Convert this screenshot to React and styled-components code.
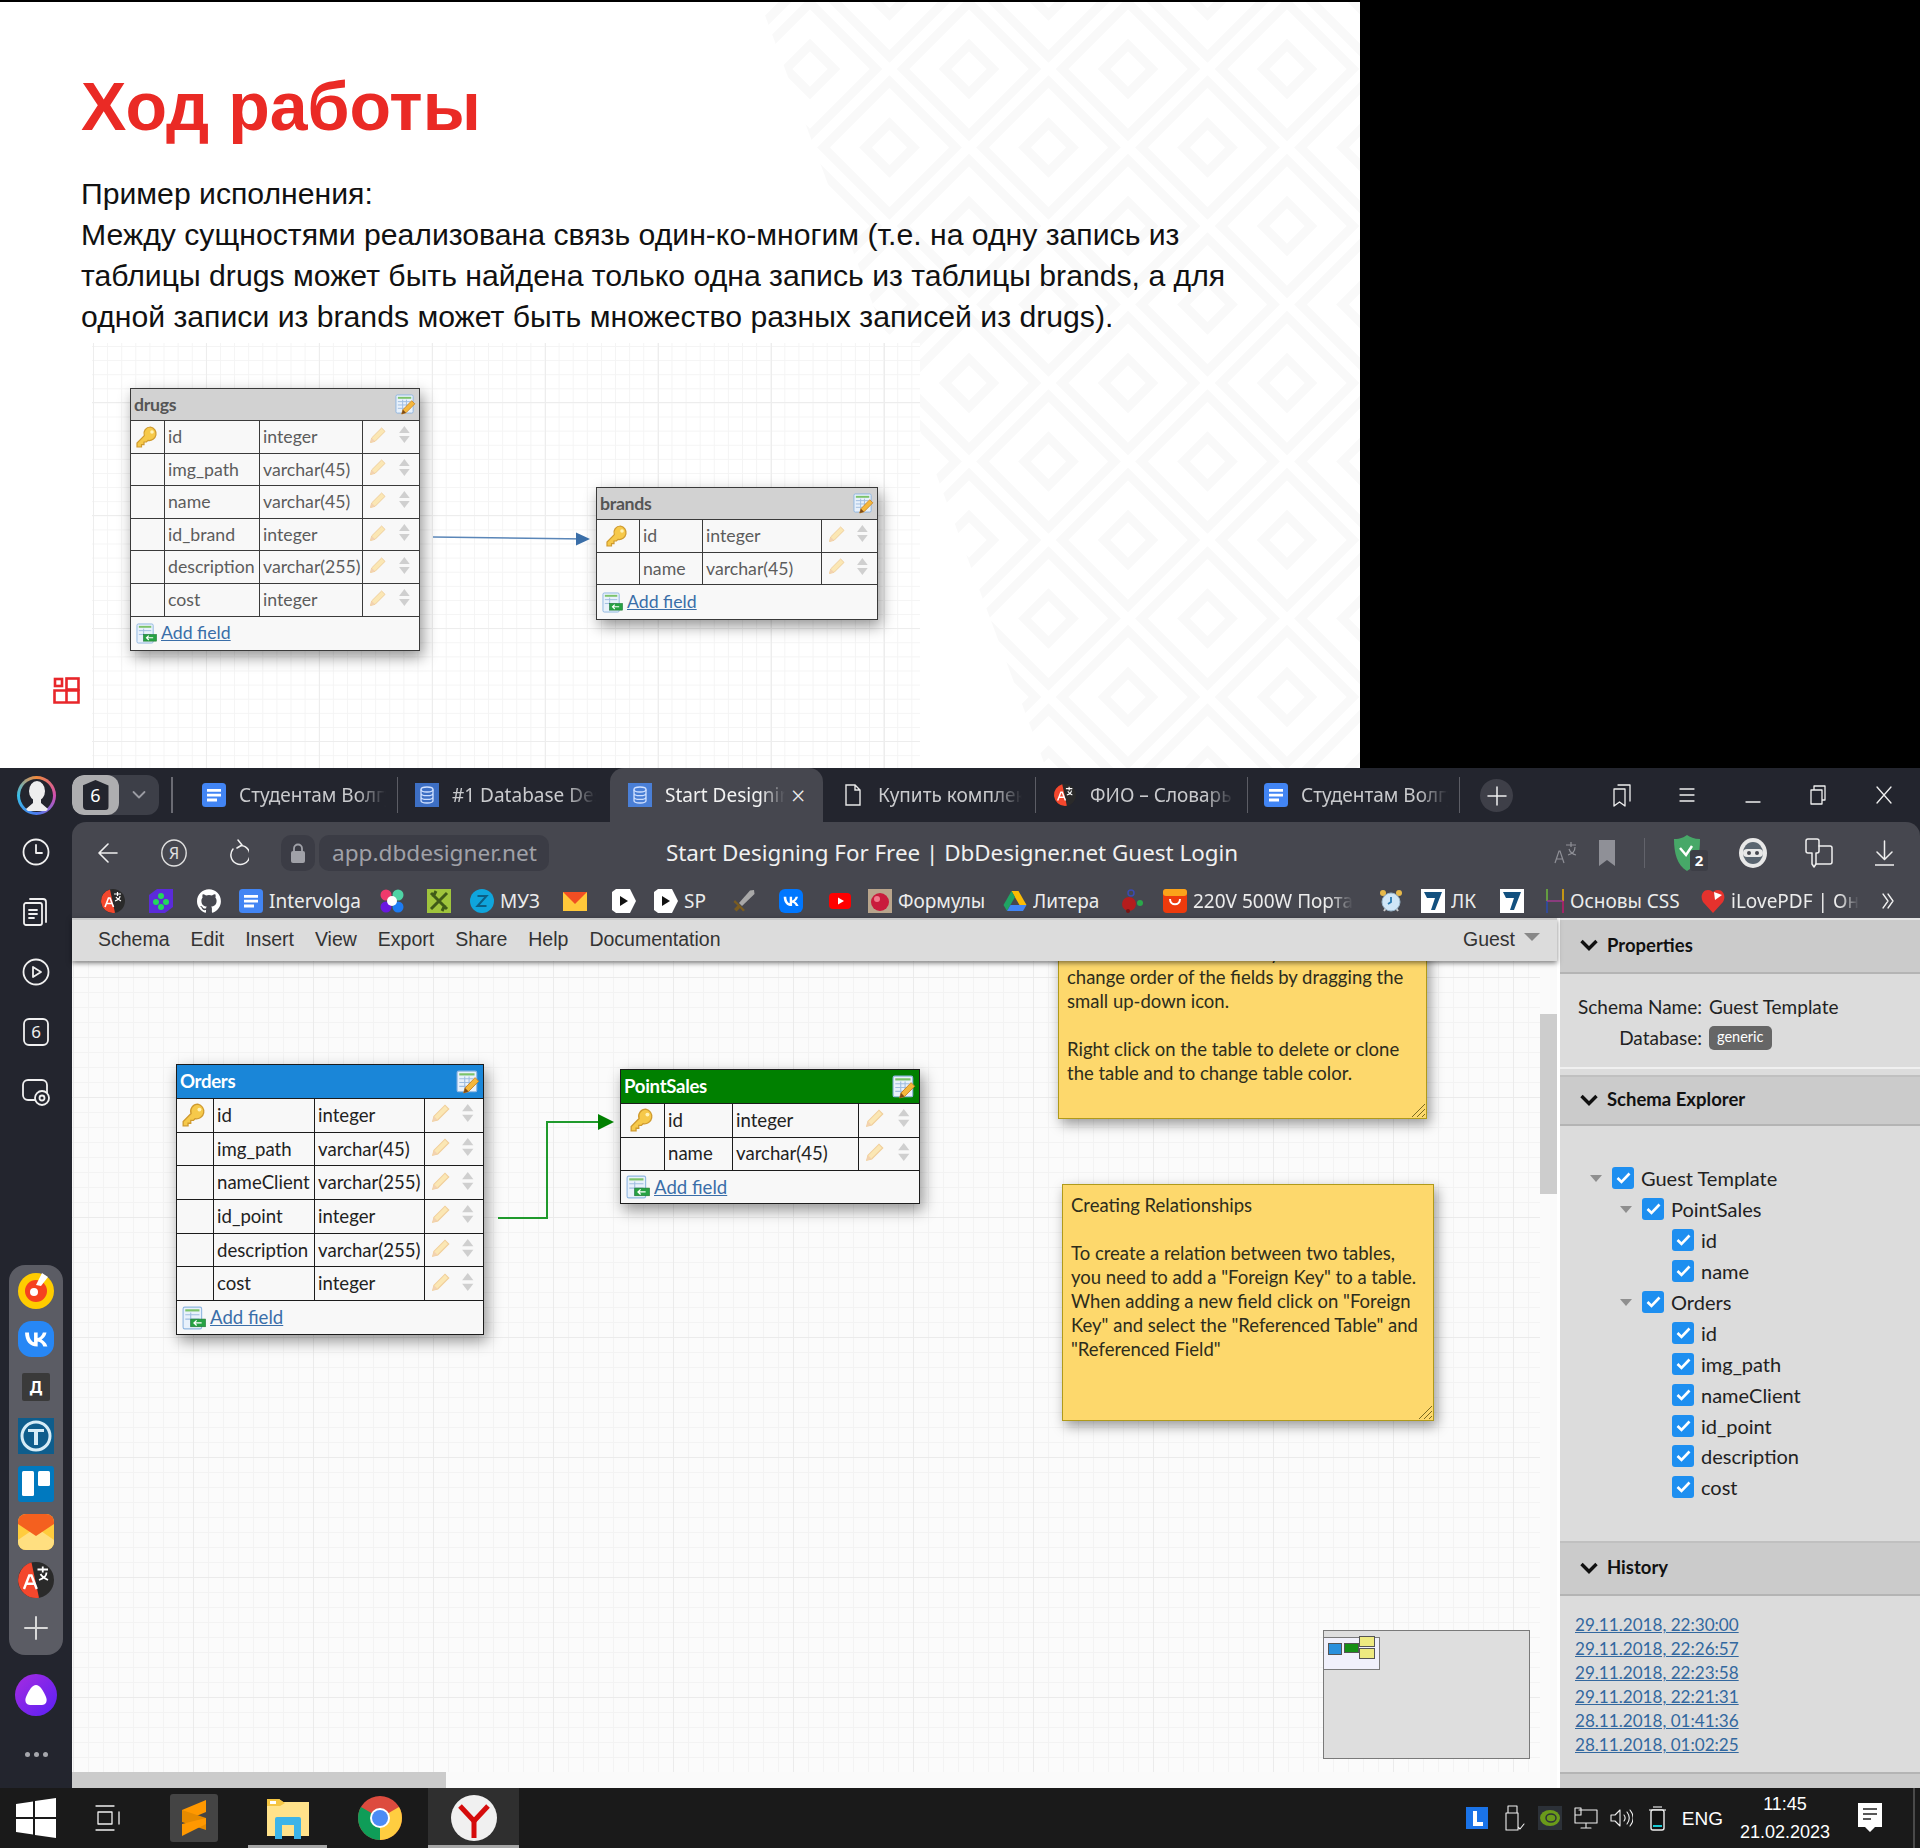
import React from "react";
import styled, { createGlobalStyle } from "styled-components";

const UI_FONT = '"Lato", "Noto Sans", sans-serif';
const BROWSER_FONT = '"Noto Sans", "Open Sans", sans-serif';
const ARIAL = '"Liberation Sans", Arial, sans-serif';

const GlobalStyle = createGlobalStyle`
  html, body { margin: 0; padding: 0; background: #000; }
  * { box-sizing: border-box; }
`;

/* ---------- table icons ---------- */
const KeyIcon = ({ size = 24 }) => (
  <svg width={size} height={size} viewBox="0 0 24 24">
    <path d="M15.5 2a6.5 6.5 0 0 0-6.2 8.6L2 18v4h4.5v-2.4H9V17h2.4l1.6-1.6A6.5 6.5 0 1 0 15.5 2z" fill="#f6c94a" stroke="#cf9a2e" strokeWidth="1.2" />
    <circle cx="17" cy="7" r="1.8" fill="#fff3b8" />
  </svg>
);
const PencilIcon = ({ size = 18 }) => (
  <svg width={size} height={size} viewBox="0 0 18 18">
    <path d="M1.5 16.5l1.2-4.6L12.6 2l3.4 3.4-9.9 9.900z" fill="#fbe7b4" stroke="#f0cf9c" strokeWidth="1" />
    <path d="M1.5 16.5l1.2-4.6 3.4 3.4z" fill="#f3d2b0" />
  </svg>
);
const UpDownIcon = ({ size = 16 }) => (
  <svg width={size * 0.75} height={size} viewBox="0 0 12 16">
    <path d="M6 0l5 6.5H1z" fill="#cfcfcf" />
    <path d="M6 16l5-6.5H1z" fill="#cfcfcf" />
  </svg>
);
const TableEditIcon = ({ size = 22 }) => (
  <svg width={size} height={size} viewBox="0 0 22 22">
    <rect x="1" y="1" width="18" height="19" rx="1.5" fill="#e8f1fb" stroke="#8fb6e0" />
    <rect x="3" y="3" width="14" height="2" fill="#7cc36a" />
    <path d="M3 8h13M3 11.5h13M3 15h13M8 6v12M12 6v12" stroke="#9fbde0" strokeWidth="1" />
    <path d="M7 21l1.3-4.5L17.5 7l3.3 3.3-9.3 9.4z" fill="#f5b73c" stroke="#c97f1c" strokeWidth=".8" />
    <path d="M7 21l1.3-4.5 3.2 3.2z" fill="#7a4a1a" />
  </svg>
);
const AddFieldIcon = ({ size = 22 }) => (
  <svg width={size} height={size} viewBox="0 0 22 22">
    <rect x="1" y="1" width="17" height="20" rx="1.5" fill="#e8f1fb" stroke="#8fb6e0" />
    <rect x="3" y="3" width="13" height="2" fill="#7cc36a" />
    <path d="M3 8h13M3 12h13M8 6v13" stroke="#9fbde0" strokeWidth="1" />
    <rect x="8" y="12" width="13.5" height="7" fill="#27a243" stroke="#1d7a32" strokeWidth=".6" />
    <path d="M18 15.5h-7m2.4-2.3l-2.4 2.3 2.4 2.3" stroke="#fff" strokeWidth="1.2" fill="none" />
  </svg>
);

/* ---------- browser icons ---------- */
const DocsIcon = ({ size = 24 }) => (
  <svg width={size} height={size} viewBox="0 0 24 24">
    <rect width="24" height="24" rx="3.5" fill="#4285f4" />
    <path d="M5 6h14v2.8H5zM5 10.8h14v2.8H5zM5 15.6h10v2.8H5z" fill="#fff" />
  </svg>
);
const DbIcon = ({ size = 24, bg = "#3d6fc4" }) => (
  <svg width={size} height={size} viewBox="0 0 24 24">
    <rect width="24" height="24" fill={bg} />
    <ellipse cx="12" cy="6.5" rx="6" ry="2.5" fill="none" stroke="#cfe0ff" strokeWidth="1.3" />
    <path d="M6 6.5v11c0 1.4 2.7 2.5 6 2.5s6-1.1 6-2.5v-11M6 10.2c0 1.4 2.7 2.5 6 2.5s6-1.1 6-2.5M6 13.900c0 1.4 2.7 2.500 6 2.500s6-1.100 6-2.500" fill="none" stroke="#cfe0ff" strokeWidth="1.3" />
  </svg>
);
const PageIcon = () => (
  <svg width="16" height="22" viewBox="0 0 16 22" fill="none" stroke="#e8e8e8" strokeWidth="1.4">
    <path d="M1 1h9l5 5v15H1zM10 1v5h5" />
  </svg>
);
const TranslateBadge = ({ size = 24 }) => (
  <svg width={size} height={size} viewBox="0 0 24 24">
    <circle cx="12" cy="12" r="12" fill="#2a2a2a" />
    <path d="M9 0.4A12 12 0 0 0 12 24a12 12 0 0 0 2-.17z" fill="#f4472d" />
    <path d="M4 18l3.5-9h1.5l3.5 9M5.500 14.5h5" stroke="#fff" strokeWidth="1.6" fill="none" />
    <path d="M13 5h7M16.5 3v4M14 12c3-1 5-3 5-5M15 8c1 2 3 3 5 4" stroke="#fff" strokeWidth="1.2" fill="none" />
  </svg>
);
const PurpleIcon = () => (
  <svg width="24" height="24" viewBox="0 0 24 24">
    <path d="M0 6l8-6h16v18l-8 6H0z" fill="#5b2bd9" />
    <circle cx="12" cy="7" r="3" fill="#22d95c" />
    <circle cx="7" cy="13" r="3" fill="#22d95c" />
    <circle cx="17" cy="13" r="3" fill="#22d95c" />
    <circle cx="12" cy="18" r="3" fill="#22d95c" />
  </svg>
);
const GithubIcon = () => (
  <svg width="24" height="24" viewBox="0 0 24 24">
    <path fill="#fff" d="M12 .3C5.4.3 0 5.7 0 12.3c0 5.3 3.4 9.800 8.200 11.400.6.1.8-.3.8-.6v-2c-3.300.7-4-1.600-4-1.600-.5-1.400-1.300-1.800-1.300-1.800-1.100-.7.1-.7.1-.7 1.200.1 1.800 1.200 1.800 1.200 1.100 1.800 2.800 1.300 3.500 1 .1-.8.4-1.300.8-1.600-2.700-.3-5.500-1.300-5.500-5.900 0-1.300.5-2.400 1.200-3.200-.1-.3-.5-1.500.1-3.200 0 0 1-.3 3.300 1.200a11.500 11.500 0 0 1 6 0c2.300-1.500 3.300-1.200 3.300-1.200.7 1.700.2 2.900.1 3.200.8.8 1.200 1.900 1.200 3.200 0 4.600-2.800 5.600-5.500 5.900.4.4.8 1.100.8 2.200v3.300c0 .3.2.7.8.6 4.800-1.600 8.200-6.100 8.200-11.400C24 5.700 18.600.3 12 .3z" />
  </svg>
);
const FlowerIcon = () => (
  <svg width="24" height="24" viewBox="0 0 24 24">
    <circle cx="6" cy="6" r="5.5" fill="#f03a6c" />
    <circle cx="18" cy="6" r="5.5" fill="#4fd3a4" />
    <circle cx="6" cy="18" r="5.5" fill="#6a18e0" />
    <circle cx="18" cy="18" r="5.5" fill="#1d7bf2" />
    <circle cx="12" cy="12" r="5" fill="#fff" />
  </svg>
);
const GreenXIcon = () => (
  <svg width="24" height="24" viewBox="0 0 24 24">
    <rect width="24" height="24" fill="#9fc43c" />
    <path d="M4 4l16 16M20 4L4 20M9 2l-3 6M15 22l3-6" stroke="#3f5a18" strokeWidth="3" />
  </svg>
);
const ZIcon = () => (
  <svg width="24" height="24" viewBox="0 0 24 24">
    <circle cx="12" cy="12" r="12" fill="#0fa5dc" />
    <path d="M7.5 7h9l-9 10h9" stroke="#0b5f85" strokeWidth="2" fill="none" />
  </svg>
);
const MailIcon = () => (
  <svg width="24" height="24" viewBox="0 0 24 24">
    <rect y="3" width="24" height="19" fill="#ffc83a" />
    <path d="M0 3h24L12 15z" fill="#f04e23" />
  </svg>
);
const PlayIcon = () => (
  <svg width="24" height="24" viewBox="0 0 24 24">
    <path d="M0 3l4-3h14l6 12-6 12H4l-4-3z" fill="#fff" />
    <path d="M8 7l8 5-8 5z" fill="#111" />
  </svg>
);
const SwordIcon = () => (
  <svg width="24" height="24" viewBox="0 0 24 24">
    <path d="M22 1l-4 .5L7 14l3 3L22.500 5z" fill="#a8a8a8" />
    <path d="M3 11l10 10-2 1.500L8 19l-3.500 3.500L2 20l3.500-3.500L1.500 13z" fill="#7a5c20" />
  </svg>
);
const VkIcon = ({ size = 24, bg = "#0077ff", radius = 6 }) => (
  <svg width={size} height={size} viewBox="0 0 24 24">
    <rect width="24" height="24" rx={radius} fill={bg} />
    <path d="M12.8 17c-5.100 0-8-3.500-8.100-9.300h2.600c.1 4.300 2 6.100 3.400 6.500V7.700h2.400v3.700c1.500-.2 3-1.900 3.500-3.700h2.400c-.4 2.300-2.100 4-3.300 4.700 1.200.6 3.100 2.100 3.900 4.600h-2.700c-.6-1.800-2-3.100-3.800-3.300V17z" fill="#fff" />
  </svg>
);
const YoutubeIcon = () => (
  <svg width="24" height="24" viewBox="0 0 24 24">
    <rect x="1" y="4" width="22" height="16" rx="4" fill="#f00" />
    <path d="M10 8.5l6 3.5-6 3.500z" fill="#fff" />
  </svg>
);
const PictureIcon = () => (
  <svg width="24" height="24" viewBox="0 0 24 24">
    <rect width="24" height="24" fill="#b9a58c" />
    <circle cx="12" cy="13" r="9" fill="#c91c3c" />
    <circle cx="9" cy="10" r="3" fill="#f07a8c" />
  </svg>
);
const DriveIcon = () => (
  <svg width="24" height="24" viewBox="0 0 24 24">
    <path d="M8.5 2h7l8 14h-7z" fill="#fbbc04" />
    <path d="M8.5 2L.5 16l3.500 6 8-14z" fill="#1fa463" />
    <path d="M4 22h16l3.500-6h-16z" fill="#4285f4" />
  </svg>
);
const RedThingIcon = () => (
  <svg width="24" height="24" viewBox="0 0 24 24">
    <circle cx="9" cy="15" r="7" fill="#b51d1d" />
    <circle cx="11" cy="4" r="3" fill="none" stroke="#3a4bb0" strokeWidth="1.5" />
    <circle cx="20" cy="14" r="3" fill="#2aa84a" />
    <circle cx="8" cy="22" r="2" fill="#7a1414" />
  </svg>
);
const AliIcon = () => (
  <svg width="24" height="24" viewBox="0 0 24 24">
    <rect width="24" height="24" rx="4" fill="#ee3a0c" />
    <rect width="24" height="7" rx="3" fill="#fba31a" />
    <path d="M7 10c0 7 10 7 10 0" stroke="#fff" strokeWidth="2" fill="none" />
  </svg>
);
const ClockIcon = () => (
  <svg width="24" height="24" viewBox="0 0 24 24">
    <circle cx="4" cy="4" r="3" fill="#e6b84a" />
    <circle cx="20" cy="4" r="3" fill="#e6b84a" />
    <path d="M5 22l2-3M19 22l-2-3" stroke="#c9c9c9" strokeWidth="2" />
    <circle cx="12" cy="13" r="9" fill="#cfe6f7" stroke="#9ab7cc" />
    <path d="M12 8v5l-3 2" stroke="#2a7ab0" strokeWidth="1.8" fill="none" />
  </svg>
);
const YLkIcon = ({ bg = "#fff" }) => (
  <svg width="24" height="24" viewBox="0 0 24 24">
    <rect width="24" height="24" fill={bg} />
    <path d="M3 3h18l-7 18h-4l4-12H6z" fill="#12507f" />
  </svg>
);
const MultiHIcon = () => (
  <svg width="18" height="24" viewBox="0 0 18 24">
    <path d="M1 0v12" stroke="#6fb83c" strokeWidth="1.5" />
    <path d="M1 12v12" stroke="#2a4bb0" strokeWidth="1.5" />
    <path d="M17 0v12" stroke="#f0b000" strokeWidth="1.5" />
    <path d="M17 12v12" stroke="#c0186c" strokeWidth="1.5" />
    <path d="M1 12h16" stroke="#a0388c" strokeWidth="1.5" />
  </svg>
);
const HeartIcon = () => (
  <svg width="24" height="24" viewBox="0 0 24 24">
    <path d="M12 24L2 13C-1 8 1 1 7 1c3 0 5 2 5 2s2-2 5-2c6 0 8 7 5 12z" fill="#e5322d" />
    <path d="M13 3l8 3-7 5z" fill="#fff" />
  </svg>
);
const StrokeIcon = ({ w = 28, h = 28, box = "0 0 28 28", sw = 1.8, color = "#f0f0f0", children }) => (
  <svg width={w} height={h} viewBox={box} fill="none" stroke={color} strokeWidth={sw} strokeLinecap="round" strokeLinejoin="round">
    {children}
  </svg>
);

/* ---------- page layout ---------- */
const Page = styled.div`
  width: 1920px;
  height: 1848px;
  background: #000;
  display: flex;
  flex-direction: column;
  overflow: hidden;
`;

/* slide */
const SlideArea = styled.div`
  height: 768px;
  padding-top: 2px;
  flex: none;
`;
const Slide = styled.section`
  position: relative;
  width: 1360px;
  height: 766px;
  background: #fff;
  overflow: hidden;
  padding: 64px 0 0 81px;
`;
const SlidePattern = styled.svg`
  position: absolute;
  left: 0;
  top: 0;
`;
const SlideTitle = styled.h1`
  position: relative;
  margin: 0;
  font: 700 68px/80px ${ARIAL};
  color: #ea2a25;
`;
const SlideText = styled.p`
  position: relative;
  margin: 27px 0 0;
  font: 400 30.2px/41px ${ARIAL};
  color: #111;
  white-space: nowrap;
`;
const ShotCanvas = styled.div`
  position: absolute;
  left: 92px;
  top: 341px;
  width: 828px;
  height: 425px;
  background-color: #fff;
  background-image:
    linear-gradient(#ededed 1px, transparent 1px),
    linear-gradient(90deg, #ededed 1px, transparent 1px),
    linear-gradient(#f4f4f4 1px, transparent 1px),
    linear-gradient(90deg, #f4f4f4 1px, transparent 1px);
  background-size: 113px 113px, 113px 113px, 14.12px 14.12px, 14.12px 14.12px;
  background-position: 0 59px, 1px 0, 0 3px, 1px 0;
`;
const SlideLogo = styled.svg`
  position: absolute;
  left: 53px;
  top: 675px;
`;

/* db tables */
const DbTable = styled.div`
  position: absolute;
  left: ${(p) => p.$x}px;
  top: ${(p) => p.$y}px;
  width: ${(p) => p.$w}px;
  background: #f8f8f8;
  border: ${(p) => p.$bw}px solid ${(p) => p.$line};
  box-shadow: 3px 6px 14px rgba(0, 0, 0, 0.42);
  font-family: ${UI_FONT};
  font-size: ${(p) => p.$fs}px;
  color: ${(p) => p.$text};
  line-height: 1;
`;
const DbHead = styled.div`
  height: ${(p) => p.$h}px;
  background: ${(p) => p.$bg};
  color: ${(p) => p.$fg};
  font-weight: 700;
  display: flex;
  align-items: center;
  justify-content: space-between;
  padding: 0 3px;
  letter-spacing: -0.3px;
`;
const DbRow = styled.div`
  display: grid;
  grid-template-columns: ${(p) => p.$cols};
  height: ${(p) => p.$h}px;
  border-top: ${(p) => p.$bw}px solid ${(p) => p.$line};
`;
const DbCell = styled.div`
  display: flex;
  align-items: center;
  padding-left: 3px;
  border-left: ${(p) => (p.$first ? 0 : p.$bw)}px solid ${(p) => p.$line};
  white-space: nowrap;
  overflow: hidden;
`;
const KeyCell = styled(DbCell)`
  justify-content: center;
  padding: 0 2px 0 0;
`;
const ActionCell = styled(DbCell)`
  justify-content: space-between;
  padding: 0 ${(p) => p.$pr}px 4px ${(p) => p.$pl}px;
`;
const AddRow = styled.div`
  height: ${(p) => p.$h}px;
  border-top: ${(p) => p.$bw}px solid ${(p) => p.$line};
  display: flex;
  align-items: center;
  gap: 4px;
  padding-left: 5px;
`;
const AddLink = styled.a`
  color: #3a6ea8;
  text-decoration: underline;
`;

/* browser */
const Browser = styled.div`
  flex: none;
  height: 1020px;
  background: #23252e;
  display: flex;
  flex-direction: column;
`;
const TabStrip = styled.div`
  height: 54px;
  flex: none;
  display: flex;
  align-items: flex-start;
  padding-left: 17px;
  font-family: ${BROWSER_FONT};
`;
const Avatar = styled.div`
  width: 39px;
  height: 39px;
  margin-top: 8px;
  border-radius: 50%;
  background: conic-gradient(#f08a3c, #d14fb0, #4a7bf0, #38c0e8, #f08a3c);
  padding: 3px;
  display: flex;
`;
const AvatarInner = styled.div`
  flex: 1;
  border-radius: 50%;
  background: #23252e;
  display: flex;
  align-items: center;
  justify-content: center;
`;
const GroupPill = styled.div`
  margin: 7px 0 0 16px;
  width: 87px;
  height: 40px;
  border-radius: 12px;
  background: #3d3f48;
  display: flex;
  overflow: hidden;
`;
const GroupCount = styled.div`
  width: 47px;
  background: #aeaeb0;
  border-radius: 12px;
  display: flex;
  align-items: center;
  justify-content: center;
`;
const CountHex = styled.div`
  width: 26px;
  height: 30px;
  background: #23252e;
  color: #fff;
  font-size: 18px;
  clip-path: polygon(50% 0, 100% 18%, 100% 100%, 0 100%, 0 18%);
  border-radius: 4px;
  display: flex;
  align-items: center;
  justify-content: center;
`;
const GroupArrow = styled.div`
  flex: 1;
  display: flex;
  align-items: center;
  justify-content: center;
`;
const StripDivider = styled.div`
  width: 2px;
  height: 36px;
  margin: 9px 0 0 12px;
  background: #6a6b73;
`;
const Tab = styled.div`
  width: ${(p) => p.$w}px;
  height: ${(p) => (p.$active ? 54 : 36)}px;
  margin-top: ${(p) => (p.$active ? 0 : 9)}px;
  padding-left: ${(p) => p.$pl}px;
  display: flex;
  align-items: center;
  position: relative;
  color: ${(p) => (p.$active ? "#f2f2f2" : "#c9cacd")};
  font-size: 19px;
  background: ${(p) => (p.$active ? "#46474f" : "transparent")};
  border-radius: ${(p) => (p.$active ? "14px 14px 0 0" : 0)};
  border-right: ${(p) => (p.$active || p.$noline ? "none" : "1px solid #5c5d65")};
`;
const TabIconBox = styled.div`
  width: 24px;
  display: flex;
  justify-content: center;
  flex: none;
`;
const TabLabel = styled.span`
  margin-left: 13px;
  width: ${(p) => p.$w}px;
  white-space: nowrap;
  overflow: hidden;
  -webkit-mask-image: linear-gradient(90deg, #000 80%, transparent);
  mask-image: linear-gradient(90deg, #000 80%, transparent);
`;
const TabClose = styled.span`
  margin-left: 6px;
  font-size: 25px;
  font-weight: 300;
  color: #eee;
`;
const PlusCircle = styled.div`
  width: 33px;
  height: 33px;
  margin: 11px 0 0 20px;
  border-radius: 50%;
  background: #3e3f48;
  display: flex;
  align-items: center;
  justify-content: center;
`;
const WinControl = styled.div`
  margin: 9px 0 0 ${(p) => p.$ml}px;
  height: 36px;
  display: flex;
  align-items: center;
`;

const BrowserBody = styled.div`
  flex: 1;
  display: flex;
  min-height: 0;
`;
const Sidebar = styled.aside`
  width: 72px;
  flex: none;
  display: flex;
  flex-direction: column;
  align-items: center;
`;
const SideSlot = styled.div`
  height: 60px;
  width: 100%;
  display: flex;
  align-items: center;
  justify-content: center;
`;
const SidePanel = styled.div`
  width: 54px;
  margin-top: 143px;
  padding: 2px 0;
  border-radius: 16px;
  background: #5b5c64;
  display: flex;
  flex-direction: column;
  align-items: center;
`;
const SidePanelSlot = styled.div`
  height: 48.2px;
  display: flex;
  align-items: center;
  justify-content: center;
`;
const AliceBubble = styled.div`
  width: 42px;
  height: 42px;
  margin-top: 19px;
  border-radius: 50%;
  background: linear-gradient(135deg, #a62ce0, #5a20f5);
  display: flex;
  align-items: center;
  justify-content: center;
`;
const SideDots = styled.div`
  margin-top: 36px;
  display: flex;
  gap: 4px;
`;
const SideDot = styled.span`
  width: 5px;
  height: 5px;
  border-radius: 50%;
  background: #a6a7ad;
`;

const Main = styled.div`
  flex: 1;
  display: flex;
  flex-direction: column;
  min-width: 0;
`;
const Toolbar = styled.div`
  height: 96px;
  flex: none;
  background: #46474f;
  border-radius: 14px 14px 0 0;
  display: flex;
  flex-direction: column;
`;
const AddressRow = styled.div`
  height: 62px;
  display: grid;
  grid-template-columns: 500px 1fr 588px;
  align-items: center;
`;
const ToolGroup = styled.div`
  display: flex;
  align-items: center;
  padding-left: 26px;
`;
const ToolGroupEnd = styled(ToolGroup)`
  justify-content: flex-end;
  padding: 0 26px 0 0;
`;
const ToolSlot = styled.div`
  margin-left: ${(p) => p.$ml || 0}px;
  display: flex;
  align-items: center;
`;
const LockPill = styled.div`
  margin-left: 32px;
  width: 34px;
  height: 36px;
  border-radius: 10px;
  background: #3b3c45;
  display: flex;
  align-items: center;
  justify-content: center;
`;
const UrlPill = styled.div`
  margin-left: 4px;
  width: 230px;
  height: 36px;
  border-radius: 10px;
  background: #3b3c45;
  color: #a0a1a8;
  font: 400 22.6px/36px ${BROWSER_FONT};
  padding-left: 13px;
  white-space: nowrap;
`;
const PageTitle = styled.div`
  color: #f1f1f1;
  font: 400 22.4px/1 ${BROWSER_FONT};
  text-align: center;
  white-space: nowrap;
`;
const ToolDivider = styled.div`
  width: 1px;
  height: 30px;
  margin-left: 29px;
  background: #62636b;
`;
const Bookmarks = styled.div`
  height: 34px;
  display: flex;
  align-items: center;
  padding-left: 29px;
  color: #ececec;
  font: 400 19px/24px ${BROWSER_FONT};
`;
const Bookmark = styled.div`
  width: ${(p) => p.$w}px;
  flex: none;
  display: flex;
  align-items: center;
  gap: 6px;
  white-space: nowrap;
`;
const BookmarkLabel = styled.span`
  overflow: hidden;
  ${(p) =>
    p.$fade &&
    `width: ${p.$fade}px;
     -webkit-mask-image: linear-gradient(90deg, #000 85%, transparent);
     mask-image: linear-gradient(90deg, #000 85%, transparent);`}
`;

/* designer app */
const Workspace = styled.div`
  flex: 1;
  display: flex;
  min-height: 0;
  background: #fff;
`;
const Designer = styled.div`
  width: 1485px;
  flex: none;
  display: flex;
  flex-direction: column;
`;
const MenuBar = styled.nav`
  position: relative;
  z-index: 3;
  height: 43px;
  flex: none;
  background: #dcdcdc;
  border-top: 2px solid #c8c8c8;
  box-shadow: 0 2px 5px rgba(0, 0, 0, 0.5);
  display: flex;
  align-items: center;
  gap: 21px;
  padding: 0 16px 2px 26px;
  font: 400 19.5px/1 ${ARIAL};
  color: #333;
`;
const GuestMenu = styled.div`
  margin-left: auto;
  display: flex;
  align-items: center;
  gap: 9px;
  margin-right: 1px;
`;
const GuestCaret = styled.span`
  width: 0;
  height: 0;
  margin-bottom: 6px;
  border: 8.5px solid transparent;
  border-top: 8px solid #888;
  border-bottom: 0;
`;
const Canvas = styled.div`
  position: relative;
  flex: 1;
  overflow: hidden;
  background-color: #fbfbfb;
  background-image:
    linear-gradient(#ebebeb 1px, transparent 1px),
    linear-gradient(90deg, #ebebeb 1px, transparent 1px),
    linear-gradient(#f3f3f3 1px, transparent 1px),
    linear-gradient(90deg, #f3f3f3 1px, transparent 1px);
  background-size: 120px 120px, 120px 120px, 15px 15px, 15px 15px;
  background-position: 0 16px, 1px 0, 0 1px, 1px 0;
`;
const Connector = styled.svg`
  position: absolute;
  left: 0;
  top: 0;
`;
const Sticky = styled.div`
  position: absolute;
  left: ${(p) => p.$x}px;
  top: ${(p) => p.$y}px;
  width: ${(p) => p.$w}px;
  height: ${(p) => p.$h}px;
  padding: ${(p) => p.$pt}px 8px 0 8px;
  background: #fdd86c;
  border: 1px solid #b09a1a;
  box-shadow: 3px 5px 12px rgba(0, 0, 0, 0.4);
  font: 400 18.5px/24px ${UI_FONT};
  color: #2c2c1c;
  white-space: pre-line;
  overflow: hidden;
`;
const Grip = styled.svg`
  position: absolute;
  right: 0;
  bottom: 0;
`;
const VScrollTrack = styled.div`
  position: absolute;
  right: 0;
  top: 0;
  bottom: 0;
  width: 17px;
  background: #fafafa;
`;
const VScrollThumb = styled.div`
  margin-top: 53px;
  height: 180px;
  background: #cdcdcd;
`;
const MiniMap = styled.div`
  position: absolute;
  left: 1251px;
  top: 669px;
  width: 207px;
  height: 129px;
  background: #dedede;
  border: 1px solid #7a7a7a;
`;
const MiniView = styled.div`
  position: absolute;
  left: 0;
  top: 6px;
  width: 56px;
  height: 33px;
  background: #f0f0fb;
  border: 1px solid #7a7a7a;
  border-left: 0;
`;
const MiniNode = styled.div`
  position: absolute;
  left: ${(p) => p.$x}px;
  top: ${(p) => p.$y}px;
  width: ${(p) => p.$w}px;
  height: ${(p) => p.$h}px;
  background: ${(p) => p.$bg};
  border: 1px solid #555;
`;
const HScroll = styled.div`
  height: 16px;
  flex: none;
  background: #fafafa;
`;
const HScrollThumb = styled.div`
  width: 374px;
  height: 100%;
  background: #cbcbcb;
`;

const Panel = styled.aside`
  flex: none;
  width: 360px;
  margin-left: 3px;
  background: #dcdcdc;
  display: flex;
  flex-direction: column;
  font: 400 19px/1 ${UI_FONT};
  color: #222;
`;
const PanelHead = styled.div`
  height: ${(p) => p.$h}px;
  margin-top: ${(p) => p.$mt || 0}px;
  flex: none;
  background: #cbcbcb;
  border-top: 2px solid ${(p) => (p.$mt ? "#c0c0c0" : "#e4e4e4")};
  border-bottom: 2px solid #b4b4b4;
  display: flex;
  align-items: center;
  gap: 9px;
  padding: 0 0 2px 20px;
  font-weight: 700;
  font-size: 18.5px;
  color: #111;
`;
const PropsBody = styled.div`
  height: 95px;
  flex: none;
  padding-top: 17px;
  border-bottom: 2px solid #f0f0f0;
  display: grid;
  grid-template-columns: 142px 1fr;
  grid-auto-rows: 31px;
  column-gap: 7px;
  align-items: center;
`;
const PropLabel = styled.div`
  text-align: right;
`;
const Badge = styled.span`
  display: inline-block;
  padding: 4px 8px 5px;
  border-radius: 5px;
  background: #666;
  color: #fff;
  font-size: 14.5px;
`;
const Tree = styled.div`
  height: 409px;
  flex: none;
  padding-top: 37px;
`;
const TreeRow = styled.div`
  height: 30.9px;
  display: flex;
  align-items: center;
  padding-left: ${(p) => 30 + p.$level * 30}px;
`;
const TreeToggle = styled.span`
  width: 12px;
  height: 0;
  margin-right: 10px;
  border-style: solid;
  border-width: 7px 6px 0;
  border-color: ${(p) => (p.$show ? "#8f8f8f" : "transparent")} transparent transparent;
`;
const CheckBox = styled.span`
  width: 22px;
  height: 22px;
  flex: none;
  border-radius: 3px;
  background: #1e8ff0;
  display: flex;
  align-items: center;
  justify-content: center;
`;
const TreeLabel = styled.span`
  margin-left: 7px;
  font-size: 20px;
`;
const HistoryList = styled.div`
  flex: 1;
  padding: 17px 0 0 15px;
  display: flex;
  flex-direction: column;
`;
const HistoryLink = styled.a`
  height: 24px;
  line-height: 24px;
  color: #33689f;
  text-decoration: underline;
  font-size: 17.1px;
`;
const PanelFoot = styled.div`
  height: 16px;
  flex: none;
  background: #cbcbcb;
  border-top: 2px solid #b4b4b4;
`;

/* taskbar */
const Taskbar = styled.footer`
  height: 60px;
  flex: none;
  background: #1a1a1a;
  display: flex;
  align-items: stretch;
`;
const TaskSlot = styled.div`
  position: relative;
  width: ${(p) => p.$w}px;
  margin-left: ${(p) => p.$ml || 0}px;
  background: ${(p) => (p.$active ? "#2f2f2f" : "transparent")};
  display: flex;
  align-items: center;
  justify-content: center;
  &::after {
    content: "";
    display: ${(p) => (p.$open ? "block" : "none")};
    position: absolute;
    left: 0;
    right: 0;
    bottom: 0;
    height: 3px;
    background: #a6a6a6;
  }
`;
const SublimeTile = styled.div`
  width: 48px;
  height: 48px;
  border-radius: 3px;
  background: #444;
  display: flex;
  align-items: center;
  justify-content: center;
`;
const Tray = styled.div`
  margin-left: auto;
  display: flex;
  align-items: center;
  color: #fff;
`;
const TraySlot = styled.div`
  margin-left: ${(p) => p.$ml}px;
  display: flex;
  align-items: center;
`;
const TrayLang = styled.div`
  margin-left: 15px;
  font: 400 19px/1 ${ARIAL};
`;
const Clock = styled.div`
  margin-left: 17px;
  width: 90px;
  text-align: center;
  font: 400 18px/28px ${ARIAL};
`;
const TrayEdge = styled.div`
  width: 2px;
  height: 100%;
  margin-left: 31px;
  margin-right: 5px;
  background: #4a4a4a;
`;

/* ---------- data ---------- */
const ordersFields = [
  ["id", "integer", true],
  ["img_path", "varchar(45)"],
  ["nameClient", "varchar(255)"],
  ["id_point", "integer"],
  ["description", "varchar(255)"],
  ["cost", "integer"],
];
const pointFields = [
  ["id", "integer", true],
  ["name", "varchar(45)"],
];
const drugsFields = [
  ["id", "integer", true],
  ["img_path", "varchar(45)"],
  ["name", "varchar(45)"],
  ["id_brand", "integer"],
  ["description", "varchar(255)"],
  ["cost", "integer"],
];
const brandsFields = [
  ["id", "integer", true],
  ["name", "varchar(45)"],
];

const bookmarks = [
  { w: 48, icon: <TranslateBadge /> },
  { w: 48, icon: <PurpleIcon /> },
  { w: 42, icon: <GithubIcon /> },
  { w: 141, icon: <DocsIcon />, label: "Intervolga" },
  { w: 47, icon: <FlowerIcon /> },
  { w: 43, icon: <GreenXIcon /> },
  { w: 93, icon: <ZIcon />, label: "МУЗ" },
  { w: 49, icon: <MailIcon /> },
  { w: 42, icon: <PlayIcon /> },
  { w: 78, icon: <PlayIcon />, label: "SP" },
  { w: 47, icon: <SwordIcon /> },
  { w: 49, icon: <VkIcon /> },
  { w: 40, icon: <YoutubeIcon /> },
  { w: 135, icon: <PictureIcon />, label: "Формулы" },
  { w: 117, icon: <DriveIcon />, label: "Литера" },
  { w: 43, icon: <RedThingIcon /> },
  { w: 216, icon: <AliIcon />, label: "220V 500W Портативный", fade: 160 },
  { w: 42, icon: <ClockIcon /> },
  { w: 79, icon: <YLkIcon />, label: "ЛК" },
  { w: 46, icon: <YLkIcon /> },
  { w: 155, icon: <MultiHIcon />, label: "Основы CSS" },
  { w: 181, icon: <HeartIcon />, label: "iLovePDF | Онлайн", fade: 128 },
];

const tree = [
  [0, "Guest Template", true],
  [1, "PointSales", true],
  [2, "id"],
  [2, "name"],
  [1, "Orders", true],
  [2, "id"],
  [2, "img_path"],
  [2, "nameClient"],
  [2, "id_point"],
  [2, "description"],
  [2, "cost"],
];

const historyDates = [
  "29.11.2018, 22:30:00",
  "29.11.2018, 22:26:57",
  "29.11.2018, 22:23:58",
  "29.11.2018, 22:21:31",
  "28.11.2018, 01:41:36",
  "28.11.2018, 01:02:25",
];

const Chevron = () => (
  <svg width="18" height="12" viewBox="0 0 18 12" fill="none" stroke="#111" strokeWidth="3.4">
    <path d="M1.5 2l7.5 7.5L16.5 2" />
  </svg>
);
const Check = () => (
  <svg width="15" height="12" viewBox="0 0 15 12" fill="none" stroke="#fff" strokeWidth="2.6">
    <path d="M1.5 6l4 4 8-8.5" />
  </svg>
);

function TableBox({ x, y, w, cols, title, headBg, headFg, fields, rowH, headH, addH, fs, bw, line, text, icons }) {
  return (
    <DbTable $x={x} $y={y} $w={w} $fs={fs} $bw={bw} $line={line} $text={text}>
      <DbHead $h={headH} $bg={headBg} $fg={headFg}>
        {title}
        <TableEditIcon size={icons.edit} />
      </DbHead>
      {fields.map(([name, type, isKey]) => (
        <DbRow key={name} $cols={cols} $h={rowH} $bw={bw} $line={line}>
          <KeyCell $first $bw={bw} $line={line}>
            {isKey && <KeyIcon size={icons.key} />}
          </KeyCell>
          <DbCell $bw={bw} $line={line}>{name}</DbCell>
          <DbCell $bw={bw} $line={line}>{type}</DbCell>
          <ActionCell $bw={bw} $line={line} $pl={icons.pl} $pr={icons.pr}>
            <PencilIcon size={icons.pencil} />
            <UpDownIcon size={icons.arrows} />
          </ActionCell>
        </DbRow>
      ))}
      <AddRow $h={addH} $bw={bw} $line={line}>
        <AddFieldIcon size={icons.edit} />
        <AddLink>Add field</AddLink>
      </AddRow>
    </DbTable>
  );
}

const mainIcons = { edit: 24, key: 26, pencil: 20, arrows: 18, pl: 6, pr: 9 };
const shotIcons = { edit: 21, key: 24, pencil: 18, arrows: 17, pl: 6, pr: 8 };

const lozenge = (cx, cy) =>
  [66, 24].map((r) => (
    <polygon
      key={cx + "-" + cy + "-" + r}
      points={`${cx},${cy - r} ${cx + r},${cy} ${cx},${cy + r} ${cx - r},${cy}`}
      fill="none"
      stroke="#f9f9f9"
      strokeWidth="9"
    />
  ));

export default function App() {
  return (
    <Page>
      <GlobalStyle />
      <SlideArea>
        <Slide>
          <SlidePattern width="1360" height="766">
            <defs>
              <pattern id="lozenges" width="159" height="157" patternUnits="userSpaceOnUse" patternTransform="translate(15 67)">
                {lozenge(0, 0)}
                {lozenge(159, 0)}
                {lozenge(0, 157)}
                {lozenge(159, 157)}
                {lozenge(79.5, 78.5)}
              </pattern>
            </defs>
            <polygon points="760,0 1360,0 1360,766 1046,766" fill="url(#lozenges)" />
          </SlidePattern>
          <SlideTitle>Ход работы</SlideTitle>
          <SlideText>
            Пример исполнения:
            <br />
            Между сущностями реализована связь один-ко-многим (т.е. на одну запись из
            <br />
            таблицы drugs может быть найдена только одна запись из таблицы brands, а для
            <br />
            одной записи из brands может быть множество разных записей из drugs).
          </SlideText>
          <ShotCanvas>
            <TableBox
              x={38} y={45} w={290}
              cols="33px 95px 103px 1fr"
              title="drugs" headBg="#d2d2d2" headFg="#555"
              fields={drugsFields}
              headH={31} rowH={32.6} addH={34}
              fs={17.7} bw={1.5} line="#3a3a3a" text="#5c5c5c" icons={shotIcons}
            />
            <TableBox
              x={504} y={144} w={282}
              cols="42px 63px 119px 1fr"
              title="brands" headBg="#d2d2d2" headFg="#555"
              fields={brandsFields}
              headH={31} rowH={32.6} addH={35}
              fs={17.7} bw={1.5} line="#3a3a3a" text="#5c5c5c" icons={shotIcons}
            />
            <Connector width="828" height="425">
              <path d="M341 194L494 196" stroke="#5a86b8" strokeWidth="1.5" fill="none" />
              <path d="M498 196l-14-6.5v13z" fill="#3a6ea8" />
            </Connector>
          </ShotCanvas>
          <SlideLogo width="27" height="27" viewBox="0 0 27 27" fill="none" stroke="#e8262a" strokeWidth="2.6">
            <rect x="2" y="2" width="7" height="7" />
            <rect x="13.5" y="1.5" width="12" height="11" />
            <path d="M1.5 13.5h24v12h-24zM13.5 13.5v12" />
          </SlideLogo>
        </Slide>
      </SlideArea>

      <Browser>
        <TabStrip>
          <Avatar>
            <AvatarInner>
              <svg width="24" height="30" viewBox="0 0 24 30">
                <ellipse cx="12" cy="10" rx="8" ry="10" fill="#eee" />
                <path d="M8 18h8v4l7 6a14 14 0 0 1-22 0l7-6z" fill="#eee" />
              </svg>
            </AvatarInner>
          </Avatar>
          <GroupPill>
            <GroupCount>
              <CountHex>6</CountHex>
            </GroupCount>
            <GroupArrow>
              <StrokeIcon w={14} h={10} box="0 0 14 10" color="#9a9ba2">
                <path d="M1.5 2l5.5 5.5L12.5 2" />
              </StrokeIcon>
            </GroupArrow>
          </GroupPill>
          <StripDivider />
          <Tab $w={225} $pl={29}>
            <TabIconBox><DocsIcon /></TabIconBox>
            <TabLabel $w={147}>Студентам Волгу</TabLabel>
          </Tab>
          <Tab $w={212} $pl={17} $noline>
            <TabIconBox><DbIcon /></TabIconBox>
            <TabLabel $w={144}>#1 Database Design</TabLabel>
          </Tab>
          <Tab $w={213} $pl={18} $active>
            <TabIconBox><DbIcon bg="#4a7fd6" /></TabIconBox>
            <TabLabel $w={120}>Start Designin</TabLabel>
            <TabClose>×</TabClose>
          </Tab>
          <Tab $w={213} $pl={18}>
            <TabIconBox><PageIcon /></TabIconBox>
            <TabLabel $w={144}>Купить комплект</TabLabel>
          </Tab>
          <Tab $w={212} $pl={17}>
            <TabIconBox><TranslateBadge size={22} /></TabIconBox>
            <TabLabel $w={144}>ФИО – Словарь</TabLabel>
          </Tab>
          <Tab $w={212} $pl={16}>
            <TabIconBox><DocsIcon /></TabIconBox>
            <TabLabel $w={147}>Студентам Волгу</TabLabel>
          </Tab>
          <PlusCircle>
            <StrokeIcon w={20} h={20} box="0 0 20 20" sw={1.5}>
              <path d="M10 1v18M1 10h18" />
            </StrokeIcon>
          </PlusCircle>
          <WinControl $ml={100}>
            <StrokeIcon w={18} h={24} box="0 0 18 24" sw={1.3}>
              <path d="M5 2h12v16M1 6h11v17l-5.5-4L1 23z" />
            </StrokeIcon>
          </WinControl>
          <WinControl $ml={48}>
            <StrokeIcon w={16} h={16} box="0 0 16 16" sw={1.3}>
              <path d="M1 2h14M1 8h14M1 14h14" />
            </StrokeIcon>
          </WinControl>
          <WinControl $ml={50}>
            <StrokeIcon w={16} h={16} box="0 0 16 16" sw={1.3}>
              <path d="M1 15h14" />
            </StrokeIcon>
          </WinControl>
          <WinControl $ml={49}>
            <StrokeIcon w={16} h={20} box="0 0 16 20" sw={1.3}>
              <path d="M1 5h11v14H1zM4 5V1h11v14h-3" />
            </StrokeIcon>
          </WinControl>
          <WinControl $ml={50}>
            <StrokeIcon w={16} h={18} box="0 0 16 18" sw={1.3}>
              <path d="M1 1l14 16M15 1L1 17" />
            </StrokeIcon>
          </WinControl>
        </TabStrip>

        <BrowserBody>
          <Sidebar>
            <SideSlot>
              <StrokeIcon>
                <circle cx="14" cy="14" r="12.5" />
                <path d="M14 7v8h6" />
              </StrokeIcon>
            </SideSlot>
            <SideSlot>
              <StrokeIcon w={26} h={30} box="0 0 26 30">
                <path d="M7 2h13a3 3 0 0 1 3 3v20M3 6h14a2 2 0 0 1 2 2v18a2 2 0 0 1-2 2H3a2 2 0 0 1-2-2V8a2 2 0 0 1 2-2z" />
                <path d="M6 13h8M6 17h8M6 21h5" />
              </StrokeIcon>
            </SideSlot>
            <SideSlot>
              <StrokeIcon>
                <circle cx="14" cy="14" r="12.5" />
                <path d="M11 9l8 5-8 5z" />
              </StrokeIcon>
            </SideSlot>
            <SideSlot>
              <svg width="26" height="28" viewBox="0 0 26 28">
                <rect x="1" y="1" width="24" height="26" rx="5" fill="none" stroke="#f0f0f0" strokeWidth="1.8" />
                <text x="13" y="20" fontSize="17" textAnchor="middle" fill="#f0f0f0" fontFamily={BROWSER_FONT}>6</text>
              </svg>
            </SideSlot>
            <SideSlot>
              <StrokeIcon w={30} h={28} box="0 0 30 28">
                <rect x="2" y="2" width="24" height="20" rx="5" />
                <circle cx="21" cy="20" r="7" fill="#23252e" />
                <circle cx="21" cy="20" r="2.5" />
              </StrokeIcon>
            </SideSlot>
            <SidePanel>
              <SidePanelSlot>
                <svg width="36" height="36" viewBox="0 0 36 36">
                  <circle cx="18" cy="18" r="18" fill="#fc0" />
                  <circle cx="18" cy="18" r="11" fill="#f5411f" />
                  <path d="M24 0l6 4-7 9-5-1z" fill="#fff" />
                  <circle cx="16" cy="19" r="4" fill="#fff" />
                </svg>
              </SidePanelSlot>
              <SidePanelSlot><VkIcon size={36} bg="#2787f5" radius={9} /></SidePanelSlot>
              <SidePanelSlot>
                <svg width="28" height="28" viewBox="0 0 28 28">
                  <rect width="28" height="28" rx="2" fill="#3a3a3a" />
                  <text x="14" y="20" fontSize="16" fontWeight="700" textAnchor="middle" fill="#fff" fontFamily={BROWSER_FONT}>Д</text>
                </svg>
              </SidePanelSlot>
              <SidePanelSlot>
                <svg width="36" height="36" viewBox="0 0 36 36">
                  <rect width="36" height="36" fill="#0e5d8c" />
                  <circle cx="18" cy="18" r="14" fill="none" stroke="#d6ecf6" strokeWidth="3" />
                  <path d="M10 11h16v3h-6v13h-4V14h-6z" fill="#d6ecf6" />
                </svg>
              </SidePanelSlot>
              <SidePanelSlot>
                <svg width="36" height="36" viewBox="0 0 36 36">
                  <rect width="36" height="36" rx="3" fill="#0079bf" />
                  <rect x="4" y="5" width="12" height="25" rx="1.5" fill="#fff" />
                  <rect x="20" y="5" width="12" height="15" rx="1.5" fill="#fff" />
                </svg>
              </SidePanelSlot>
              <SidePanelSlot>
                <svg width="36" height="36" viewBox="0 0 36 36">
                  <rect width="36" height="36" rx="8" fill="#ffcc3d" />
                  <path d="M0 26l13-9h10l13 9v2a8 8 0 0 1-8 8H8a8 8 0 0 1-8-8z" fill="#ffdf80" />
                  <path d="M0 8a8 8 0 0 1 8-8h20a8 8 0 0 1 8 8v2L18 22 0 10z" fill="#f4601f" />
                </svg>
              </SidePanelSlot>
              <SidePanelSlot><TranslateBadge size={36} /></SidePanelSlot>
              <SidePanelSlot>
                <StrokeIcon w={24} h={24} box="0 0 24 24" sw={2} color="#d8d8d8">
                  <path d="M12 1v22M1 12h22" />
                </StrokeIcon>
              </SidePanelSlot>
            </SidePanel>
            <AliceBubble>
              <svg width="24" height="22" viewBox="0 0 24 22">
                <path d="M12 1c4 0 7 5 10 12 2 5-1 8-4 8H6c-3 0-6-3-4-8C5 6 8 1 12 1z" fill="#fff" />
              </svg>
            </AliceBubble>
            <SideDots>
              <SideDot />
              <SideDot />
              <SideDot />
            </SideDots>
          </Sidebar>

          <Main>
            <Toolbar>
              <AddressRow>
                <ToolGroup>
                  <StrokeIcon w={20} h={22} box="0 0 20 22" sw={1.6}>
                    <path d="M19 11H2M10 2l-9 9 9 9" />
                  </StrokeIcon>
                  <ToolSlot $ml={43}>
                    <svg width="26" height="28" viewBox="0 0 26 28">
                      <ellipse cx="13" cy="14" rx="12.2" ry="13" fill="none" stroke="#e0e0e0" strokeWidth="1.4" />
                      <text x="13" y="20" fontSize="16" textAnchor="middle" fill="#e0e0e0" fontFamily={BROWSER_FONT}>Я</text>
                    </svg>
                  </ToolSlot>
                  <ToolSlot $ml={41}>
                    <StrokeIcon w={21} h={28} box="0 0 21 28" sw={1.5}>
                      <path d="M13 6.500A9.500 9.500 0 1 1 5 10M10 1l4 5-5 3" />
                    </StrokeIcon>
                  </ToolSlot>
                  <LockPill>
                    <svg width="14" height="20" viewBox="0 0 14 20">
                      <path d="M3 9V5.5a4 4 0 0 1 8 0V9" fill="none" stroke="#a0a1a8" strokeWidth="1.8" />
                      <rect y="8" width="14" height="12" rx="2" fill="#a0a1a8" />
                    </svg>
                  </LockPill>
                  <UrlPill>app.dbdesigner.net</UrlPill>
                </ToolGroup>
                <PageTitle>Start Designing For Free | DbDesigner.net Guest Login</PageTitle>
                <ToolGroupEnd>
                  <svg width="24" height="24" viewBox="0 0 24 24" fill="none" stroke="#8f9097" strokeWidth="1.2">
                    <path d="M1 22l4-12h1l4 12M2.5 18h6M12 4h10M17 1v5M14 14c4-1 7-4 7-8M15 8c1 3 3 5 7 6" />
                  </svg>
                  <ToolSlot $ml={21}>
                    <svg width="16" height="26" viewBox="0 0 16 26">
                      <path d="M0 0h16v26l-8-6-8 6z" fill="#8f9097" />
                    </svg>
                  </ToolSlot>
                  <ToolDivider />
                  <ToolSlot $ml={28}>
                    <svg width="35" height="36" viewBox="0 0 35 36">
                      <path d="M1 4c7 0 10-2 13-4 3 2 7 4 13 4 0 14-2 26-13 32C4 30 1 18 1 4z" fill="#47a868" />
                      <path d="M7 13l6 7 6-9" fill="none" stroke="#fff" strokeWidth="2.5" />
                      <rect x="17" y="15" width="18" height="21" rx="3" fill="#3d3e46" />
                      <text x="26" y="31" fontSize="15" fontWeight="700" textAnchor="middle" fill="#fff" fontFamily={BROWSER_FONT}>2</text>
                    </svg>
                  </ToolSlot>
                  <ToolSlot $ml={31}>
                    <svg width="28" height="30" viewBox="0 0 28 30">
                      <ellipse cx="14" cy="15" rx="14" ry="15" fill="#e8e8e8" />
                      <ellipse cx="14" cy="15" rx="10" ry="11" fill="#5a6570" />
                      <rect x="4" y="11" width="20" height="8" rx="4" fill="#e8e8e8" />
                      <circle cx="10" cy="15" r="2" fill="#46474f" />
                      <circle cx="18" cy="15" r="2" fill="#46474f" />
                    </svg>
                  </ToolSlot>
                  <ToolSlot $ml={38}>
                    <StrokeIcon w={28} h={30} box="0 0 28 30" sw={1.5}>
                      <path d="M3 1h9a2 2 0 0 1 2 2v10a2 2 0 0 1-2 2H11v11l-2 3-2-3V15H3a2 2 0 0 1-2-2V3a2 2 0 0 1 2-2z" />
                      <path d="M14 8h11a2 2 0 0 1 2 2v14a2 2 0 0 1-2 2H11" />
                    </StrokeIcon>
                  </ToolSlot>
                  <ToolSlot $ml={42}>
                    <StrokeIcon w={19} h={26} box="0 0 19 26" sw={1.5}>
                      <path d="M9.5 1v18M2 12l7.5 7.5L17 12M0 25h19" />
                    </StrokeIcon>
                  </ToolSlot>
                </ToolGroupEnd>
              </AddressRow>
              <Bookmarks>
                {bookmarks.map((b, i) => (
                  <Bookmark key={i} $w={b.w}>
                    {b.icon}
                    {b.label && <BookmarkLabel $fade={b.fade}>{b.label}</BookmarkLabel>}
                  </Bookmark>
                ))}
                <StrokeIcon w={12} h={16} box="0 0 12 16" sw={1.3}>
                  <path d="M1 1l5 7-5 7M6 1l5 7-5 7" />
                </StrokeIcon>
              </Bookmarks>
            </Toolbar>

            <Workspace>
              <Designer>
                <MenuBar>
                  <span>Schema</span>
                  <span>Edit</span>
                  <span>Insert</span>
                  <span>View</span>
                  <span>Export</span>
                  <span>Share</span>
                  <span>Help</span>
                  <span>Documentation</span>
                  <GuestMenu>
                    Guest
                    <GuestCaret />
                  </GuestMenu>
                </MenuBar>
                <Canvas>
                  <TableBox
                    x={104} y={103} w={308}
                    cols="36px 101px 110px 1fr"
                    title="Orders" headBg="#1a86d8" headFg="#fff"
                    fields={ordersFields}
                    headH={33} rowH={33.7} addH={34}
                    fs={18.6} bw={1.5} line="#1c1c1c" text="#222" icons={mainIcons}
                  />
                  <TableBox
                    x={548} y={108} w={300}
                    cols="43px 68px 126px 1fr"
                    title="PointSales" headBg="#008000" headFg="#fff"
                    fields={pointFields}
                    headH={33} rowH={33.5} addH={33}
                    fs={18.6} bw={1.5} line="#1c1c1c" text="#222" icons={mainIcons}
                  />
                  <Connector width="700" height="400">
                    <path d="M426 257h49v-96h54" fill="none" stroke="#1f9a2c" strokeWidth="2" />
                    <path d="M542 161l-16-8v16z" fill="#008000" />
                  </Connector>
                  <Sticky $x={986} $y={-24} $w={369} $h={182} $pt={3}>
                    {"Each table has fields and you can\nchange order of the fields by dragging the\nsmall up-down icon.\n\nRight click on the table to delete or clone\nthe table and to change table color."}
                    <Grip width="15" height="15" viewBox="0 0 15 15" stroke="#7a6a20" strokeWidth="1">
                      <path d="M1 14L14 1M6 14l8-8M11 14l3-3" />
                    </Grip>
                  </Sticky>
                  <Sticky $x={990} $y={223} $w={372} $h={237} $pt={8}>
                    {'Creating Relationships\n\nTo create a relation between two tables,\nyou need to add a "Foreign Key" to a table.\nWhen adding a new field click on "Foreign\nKey" and select the "Referenced Table" and\n"Referenced Field"'}
                    <Grip width="15" height="15" viewBox="0 0 15 15" stroke="#7a6a20" strokeWidth="1">
                      <path d="M1 14L14 1M6 14l8-8M11 14l3-3" />
                    </Grip>
                  </Sticky>
                  <VScrollTrack>
                    <VScrollThumb />
                  </VScrollTrack>
                  <MiniMap>
                    <MiniView />
                    <MiniNode $x={4} $y={12} $w={14} $h={12} $bg="#2a90dc" />
                    <MiniNode $x={20} $y={12} $w={15} $h={10} $bg="#169016" />
                    <MiniNode $x={35} $y={5} $w={16} $h={11} $bg="#eeea80" />
                    <MiniNode $x={35} $y={17} $w={16} $h={11} $bg="#eeea80" />
                  </MiniMap>
                </Canvas>
                <HScroll>
                  <HScrollThumb />
                </HScroll>
              </Designer>

              <Panel>
                <PanelHead $h={56}>
                  <Chevron />
                  Properties
                </PanelHead>
                <PropsBody>
                  <PropLabel>Schema Name:</PropLabel>
                  <div>Guest Template</div>
                  <PropLabel>Database:</PropLabel>
                  <div><Badge>generic</Badge></div>
                </PropsBody>
                <PanelHead $h={51} $mt={6}>
                  <Chevron />
                  Schema Explorer
                </PanelHead>
                <Tree>
                  {tree.map(([level, name, open], i) => (
                    <TreeRow key={i} $level={level}>
                      <TreeToggle $show={open} />
                      <CheckBox><Check /></CheckBox>
                      <TreeLabel>{name}</TreeLabel>
                    </TreeRow>
                  ))}
                </Tree>
                <PanelHead $h={55} $mt={6}>
                  <Chevron />
                  History
                </PanelHead>
                <HistoryList>
                  {historyDates.map((d) => (
                    <HistoryLink key={d}>{d}</HistoryLink>
                  ))}
                </HistoryList>
                <PanelFoot />
              </Panel>
            </Workspace>
          </Main>
        </BrowserBody>
      </Browser>

      <Taskbar>
        <TaskSlot $w={72}>
          <svg width="40" height="40" viewBox="0 0 40 40">
            <path d="M0 6l17-2.5V19H0zM19 3l21-3v19H19zM0 21h17v15.500L0 34zM19 21h21v19l-21-3z" fill="#fff" />
          </svg>
        </TaskSlot>
        <TaskSlot $w={71}>
          <StrokeIcon w={26} h={26} box="0 0 26 26" sw={1.3}>
            <path d="M1 1h18M1 25h18M3 7h14v12H3zM24 7v12" />
          </StrokeIcon>
        </TaskSlot>
        <TaskSlot $w={48} $ml={27}>
          <SublimeTile>
            <svg width="26" height="36" viewBox="0 0 26 36">
              <path d="M25 0v12L1 22V10z" fill="#ff9800" />
              <path d="M1 10l24 8v12L1 22z" fill="#e68a00" />
              <path d="M25 18v6L1 36V24z" fill="#ff9800" />
            </svg>
          </SublimeTile>
        </TaskSlot>
        <TaskSlot $w={79} $ml={30} $open>
          <svg width="42" height="42" viewBox="0 0 42 42">
            <path d="M0 2h12l4 3h26v34H0z" fill="#ffe28a" />
            <path d="M0 2h12l6 4-5 3H0z" fill="#f5c542" />
            <rect x="3" y="4" width="6" height="3" fill="#fff" />
            <path d="M8 22a2 2 0 0 1 2-2h22a2 2 0 0 1 2 2v20h-7V28H15v14H8z" fill="#3cb4e8" />
          </svg>
        </TaskSlot>
        <TaskSlot $w={80} $ml={13}>
          <svg width="44" height="44" viewBox="0 0 44 44">
            <circle cx="22" cy="22" r="22" fill="#dd4b3e" />
            <path d="M22 22L41 11a22 22 0 0 1-19 33z" fill="#ffcd40" />
            <path d="M22 22L22 44A22 22 0 0 1 3 11z" fill="#0f9d58" />
            <circle cx="22" cy="22" r="10" fill="#fff" />
            <circle cx="22" cy="22" r="8" fill="#4c8bf5" />
          </svg>
        </TaskSlot>
        <TaskSlot $w={91} $ml={8} $active $open>
          <svg width="46" height="46" viewBox="0 0 46 46">
            <circle cx="23" cy="23" r="23" fill="#f0f0f0" />
            <path d="M9 11l14 15 14-15" fill="none" stroke="#d50c0c" strokeWidth="5" />
            <path d="M23 25v18" stroke="#d50c0c" strokeWidth="5" />
          </svg>
        </TaskSlot>
        <Tray>
          <svg width="22" height="22" viewBox="0 0 22 22">
            <rect width="22" height="22" fill="#1a73e8" />
            <path d="M7 4h4v11h6v4H7z" fill="#fff" />
          </svg>
          <TraySlot $ml={17}>
            <StrokeIcon w={20} h={26} box="0 0 20 26" sw={1.1}>
              <path d="M3 1h9v7H3zM1 8h12v17H1zM13 22l2 2 4-5" />
            </StrokeIcon>
          </TraySlot>
          <TraySlot $ml={13}>
            <svg width="24" height="24" viewBox="0 0 24 24">
              <rect width="24" height="24" fill="#2c3138" />
              <ellipse cx="12" cy="12" rx="10" ry="8" fill="#6a9a1a" />
              <ellipse cx="13" cy="12" rx="5" ry="4" fill="none" stroke="#2c3138" strokeWidth="1.5" />
            </svg>
          </TraySlot>
          <TraySlot $ml={12}>
            <StrokeIcon w={24} h={22} box="0 0 24 22" sw={1.1}>
              <path d="M5 3h18v13H1V1h6v7H1M12 16v4M7 21h10" />
            </StrokeIcon>
          </TraySlot>
          <TraySlot $ml={12}>
            <StrokeIcon w={23} h={22} box="0 0 23 22" sw={1.1}>
              <path d="M1 8h4l5-5v16l-5-5H1zM14 8c1.5 2 1.5 4 0 6M17 5c3 4 3 8 0 12M20 3c4 5 4 11 0 16" />
            </StrokeIcon>
          </TraySlot>
          <TraySlot $ml={15}>
            <svg width="19" height="26" viewBox="0 0 19 26">
              <path d="M5 2h9M1 5h17" stroke="#bbb" strokeWidth="1.5" />
              <rect x="3" y="5" width="13" height="20" rx="2" fill="#111" stroke="#eee" strokeWidth="1.4" />
              <path d="M5 21h9" stroke="#17c9d4" strokeWidth="2" />
            </svg>
          </TraySlot>
          <TrayLang>ENG</TrayLang>
          <Clock>
            11:45
            <br />
            21.02.2023
          </Clock>
          <TraySlot $ml={28}>
            <svg width="24" height="30" viewBox="0 0 24 30">
              <path d="M0 0h24v24h-7l-5 5-5-5H0z" fill="#fff" />
              <path d="M5 6h14M5 11h14M5 16h8" stroke="#222" strokeWidth="1.4" />
            </svg>
          </TraySlot>
          <TrayEdge />
        </Tray>
      </Taskbar>
    </Page>
  );
}
